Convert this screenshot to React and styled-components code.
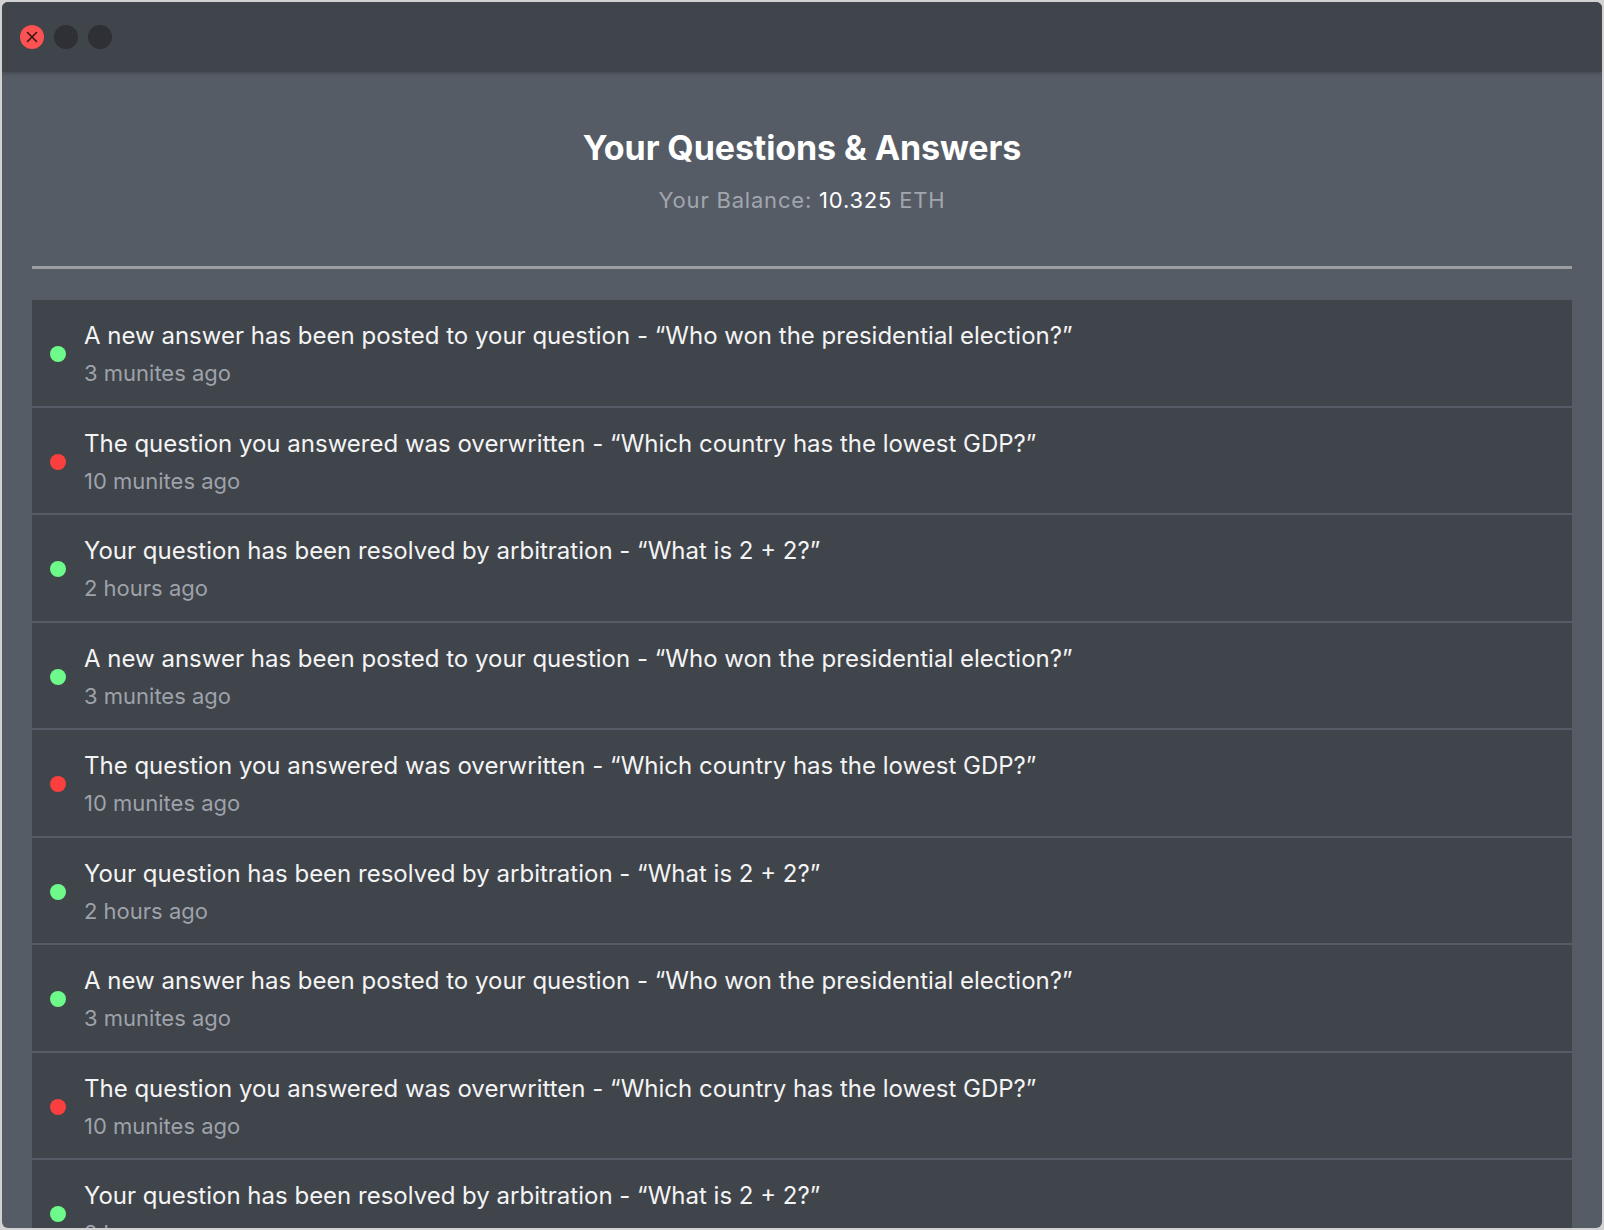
import React from 'react'
import styled, { createGlobalStyle } from 'styled-components';

const GlobalStyle = createGlobalStyle`
    html, body {
        margin: 0;
        padding: 0;
        background: #d2d2d2;
        font-family: Inter, "Noto Sans", sans-serif;
        overflow: hidden;
    }
`;

const Screen = styled.div`
    width: 1604px;
    height: 1230px;
    padding: 2px 2px 0 2px;
    box-sizing: border-box;
`;

const Window = styled.div`
    width: 1600px;
    height: 1226px;
    border-radius: 6px;
    overflow: hidden;
    background-color: #565c66;
    display: flex;
    flex-direction: column;
`;

const TitleBar = styled.div`
    height: 70px;
    flex-shrink: 0;
    background-color: #40444b;
    display: flex;
    align-items: center;
    gap: 10px;
    padding-left: 18px;
    box-shadow: 0 1px 4px rgba(0, 0, 0, 0.25);
    position: relative;
    z-index: 1;
`;

const Light = styled.div`
    width: 24px;
    height: 24px;
    border-radius: 50%;
    background-color: ${props => props.close ? '#fc5251' : '#2e3035'};
    display: flex;
    align-items: center;
    justify-content: center;
`;

const Content = styled.div`
    padding: 56px 30px 0;
    display: flex;
    flex-direction: column;
`;

const Header = styled.div`
    display: flex;
    flex-direction: column;
    align-items: center;
    gap: 18px;
`;

const Title = styled.h1`
    margin: 0;
    font-size: 34px;
    line-height: 40px;
    font-weight: 700;
    color: #ffffff;
    letter-spacing: -0.1px;
`;

const Balance = styled.p`
    margin: 0;
    font-size: 22px;
    line-height: 28px;
    letter-spacing: 0.8px;
    color: #a1a6ae;
`;

const Amount = styled.span`
    color: #ffffff;
`;

const Divider = styled.div`
    height: 3px;
    background-color: #9b9e9e;
    margin: 52px 0 31px;
`;

const List = styled.div`
    display: flex;
    flex-direction: column;
    gap: 2px;
`;

const Row = styled.div`
    background-color: #40444b;
    display: flex;
    align-items: center;
    gap: 18px;
    padding: 21px 18px 18.5px;
`;

const Dot = styled.span`
    width: 16px;
    height: 16px;
    border-radius: 50%;
    flex-shrink: 0;
    background-color: ${props => props.status === 'bad' ? '#fb3f3f' : '#6dfa8b'};
`;

const Texts = styled.div`
    display: flex;
    flex-direction: column;
    gap: 8px;
`;

const Message = styled.div`
    font-size: 24px;
    line-height: 30px;
    color: #f4f4f4;
`;

const Time = styled.div`
    font-size: 22px;
    line-height: 28px;
    color: #9ea2aa;
`;

const notifications = [
    { status: 'good', text: 'A new answer has been posted to your question - \u201cWho won the presidential election?\u201d', time: '3 munites ago' },
    { status: 'bad', text: 'The question you answered was overwritten - \u201cWhich country has the lowest GDP?\u201d', time: '10 munites ago' },
    { status: 'good', text: 'Your question has been resolved by arbitration - \u201cWhat is 2 + 2?\u201d', time: '2 hours ago' },
];

const items = [...notifications, ...notifications, ...notifications];

export default function App() {
    return (
        <Screen>
            <GlobalStyle />
            <Window>
                <TitleBar>
                    <Light close>
                        <svg width="14" height="14" viewBox="0 0 14 14">
                            <path d="M2.5 2.5 L11.5 11.5 M11.5 2.5 L2.5 11.5" stroke="#3a1414" strokeWidth="1.6" strokeLinecap="round" />
                        </svg>
                    </Light>
                    <Light />
                    <Light />
                </TitleBar>
                <Content>
                    <Header>
                        <Title>Your Questions &amp; Answers</Title>
                        <Balance>Your Balance: <Amount>10.325</Amount> ETH</Balance>
                    </Header>
                    <Divider />
                    <List>
                        {items.map((item, i) => (
                            <Row key={i}>
                                <Dot status={item.status} />
                                <Texts>
                                    <Message>{item.text}</Message>
                                    <Time>{item.time}</Time>
                                </Texts>
                            </Row>
                        ))}
                    </List>
                </Content>
            </Window>
        </Screen>
    )
}
